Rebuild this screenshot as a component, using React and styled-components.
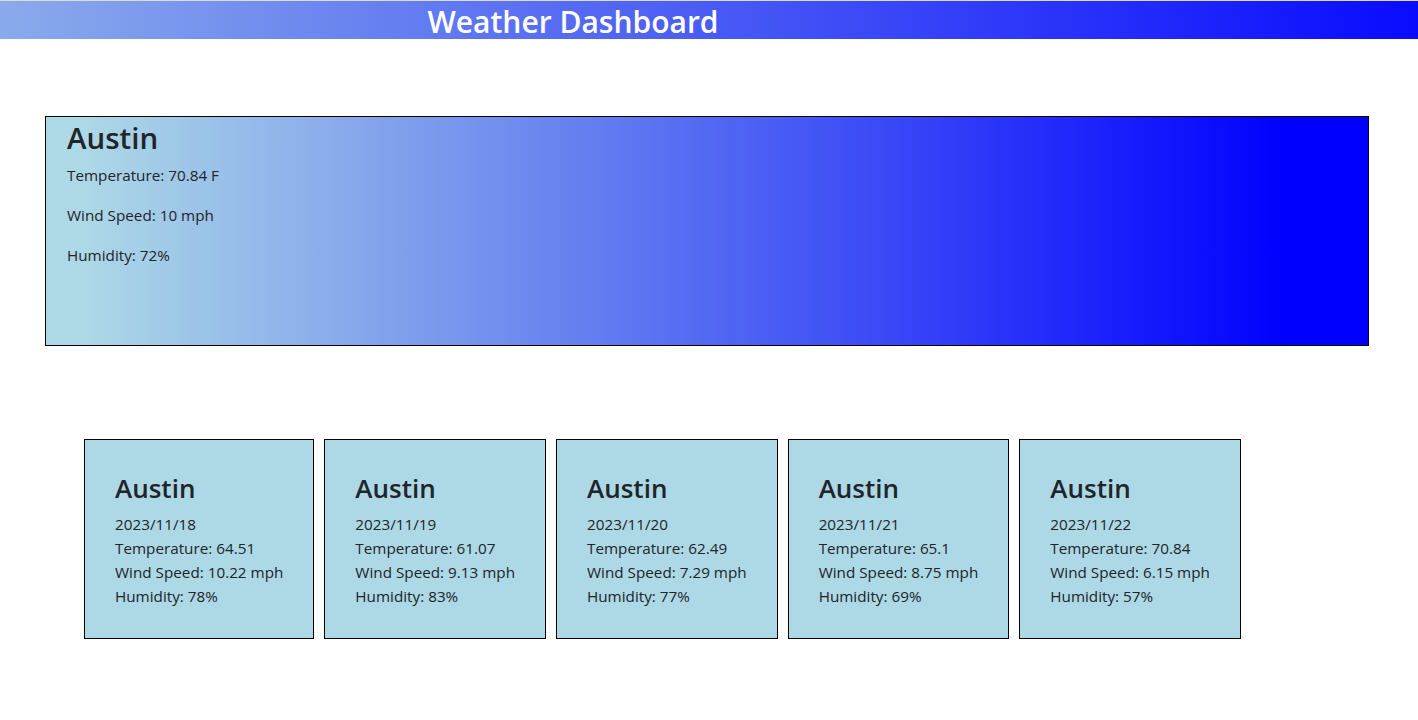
import React from "react";
import styled, { createGlobalStyle } from "styled-components";

const GlobalStyle = createGlobalStyle`
  *, *::before, *::after { box-sizing: border-box; }
  body {
    margin: 0;
    font-family: "Open Sans", "Noto Sans", sans-serif;
    font-size: 15.25px;
    line-height: 24px;
    color: #212529;
    background: #ffffff;
  }
`;

const Header = styled.header`
  display: flex;
  justify-content: center;
  align-items: flex-start;
  height: 39px;
  padding: 4px 272px 0 0;
  border-top: 1px solid #dcdcdc;
  background: linear-gradient(90deg, #89abeb 0%, #090bfe 100%);
`;

const Title = styled.h1`
  margin: 0;
  font-size: 30px;
  line-height: 34px;
  font-weight: 600;
  color: #ffffff;
`;

const Current = styled.section`
  margin: 77px 49px 0 45px;
  height: 230px;
  padding: 3px 21px 0;
  border: 1px solid #000000;
  background: linear-gradient(90deg, #add8e6 3%, #0000ff 94%);
`;

const CityName = styled.h2`
  margin: 0 0 8px;
  font-size: 29.5px;
  line-height: 1.2;
  font-weight: 600;
`;

const Stat = styled.p`
  margin: 0 0 16px;
`;

const Forecast = styled.section`
  display: flex;
  gap: 10px;
  margin-top: 93px;
  padding-left: 84px;
`;

const Card = styled.article`
  height: 200px;
  padding: 33px 30px 0;
  border: 1px solid #000000;
  background: #add8e6;
`;

const CardTitle = styled.h3`
  margin: 0 0 8px;
  font-size: 26px;
  line-height: 1.2;
  font-weight: 600;
`;

const Line = styled.div`
  white-space: nowrap;
`;

const days = [
  { date: "2023/11/18", temp: "64.51", wind: "10.22", hum: "78" },
  { date: "2023/11/19", temp: "61.07", wind: "9.13", hum: "83" },
  { date: "2023/11/20", temp: "62.49", wind: "7.29", hum: "77" },
  { date: "2023/11/21", temp: "65.1", wind: "8.75", hum: "69" },
  { date: "2023/11/22", temp: "70.84", wind: "6.15", hum: "57" },
];

export default function App() {
  return (
    <>
      <GlobalStyle />
      <Header>
        <Title>Weather Dashboard</Title>
      </Header>
      <Current>
        <CityName>Austin</CityName>
        <Stat>Temperature: 70.84 F</Stat>
        <Stat>Wind Speed: 10 mph</Stat>
        <Stat>Humidity: 72%</Stat>
      </Current>
      <Forecast>
        {days.map((d) => (
          <Card key={d.date}>
            <CardTitle>Austin</CardTitle>
            <Line>{d.date}</Line>
            <Line>Temperature: {d.temp}</Line>
            <Line>Wind Speed: {d.wind} mph</Line>
            <Line>Humidity: {d.hum}%</Line>
          </Card>
        ))}
      </Forecast>
    </>
  );
}
